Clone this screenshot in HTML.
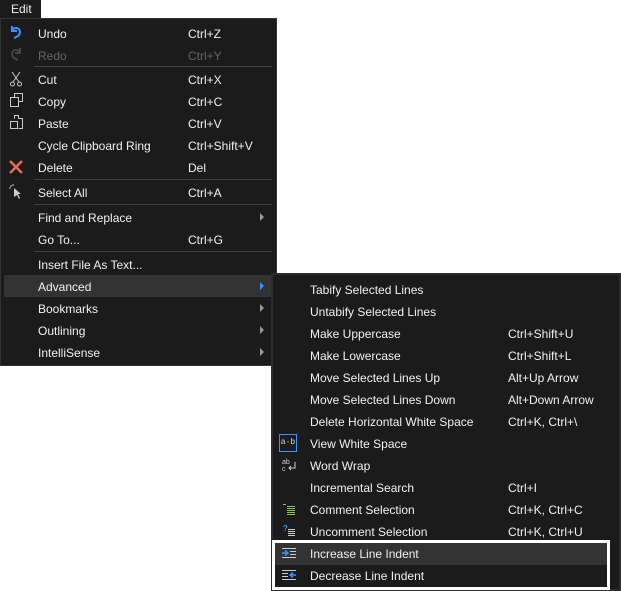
<!DOCTYPE html>
<html><head><style>
body{margin:0;width:621px;height:591px;background:#fff;position:relative;overflow:hidden;font-family:"Liberation Sans",sans-serif;font-size:12px;color:#f1f1f1}
.tab{position:absolute;left:0;top:0;width:41px;height:18px;background:#1b1b1c;color:#f1f1f1;line-height:19px;padding-left:11px;box-sizing:border-box}
.menu{position:absolute;background:#1b1b1c;border:1px solid #333337;box-sizing:border-box}
.it{position:absolute;height:22px;line-height:24px;white-space:nowrap}
.sc{position:absolute;line-height:24px}
.sep{position:absolute;height:1px;background:#3f3f46}
.arr{position:absolute;width:0;height:0;border-left:4px solid #999;border-top:4px solid transparent;border-bottom:4px solid transparent}
.ic{position:absolute}
</style></head><body>
<div class="tab">Edit</div>
<div class="menu" style="left:0;top:18px;width:277px;height:348px"></div>
<div style="position:absolute;left:4px;top:275px;width:269px;height:22px;background:#333334"></div>
<div class="menu" style="left:271px;top:273px;width:350px;height:318px;border-color:#2d2d30;border-width:2px"></div>
<div style="position:absolute;left:275px;top:543px;width:332px;height:22px;background:#333334"></div>
<div style="position:absolute;left:272px;top:540px;width:338px;height:50px;border:3px solid #fff;box-sizing:border-box"></div>

<div class="it" style="left:38px;top:22px">Undo</div><div class="sc" style="left:188px;top:22px">Ctrl+Z</div>
<div class="it" style="left:38px;top:44px;color:#656565">Redo</div><div class="sc" style="left:188px;top:44px;color:#656565">Ctrl+Y</div>
<div class="sep" style="left:34px;top:66px;width:238px"></div>
<div class="it" style="left:38px;top:68px">Cut</div><div class="sc" style="left:188px;top:68px">Ctrl+X</div>
<div class="it" style="left:38px;top:90px">Copy</div><div class="sc" style="left:188px;top:90px">Ctrl+C</div>
<div class="it" style="left:38px;top:112px">Paste</div><div class="sc" style="left:188px;top:112px">Ctrl+V</div>
<div class="it" style="left:38px;top:134px">Cycle Clipboard Ring</div><div class="sc" style="left:188px;top:134px">Ctrl+Shift+V</div>
<div class="it" style="left:38px;top:156px">Delete</div><div class="sc" style="left:188px;top:156px">Del</div>
<div class="sep" style="left:34px;top:179px;width:238px"></div>
<div class="it" style="left:38px;top:181px">Select All</div><div class="sc" style="left:188px;top:181px">Ctrl+A</div>
<div class="sep" style="left:34px;top:204px;width:238px"></div>
<div class="it" style="left:38px;top:206px">Find and Replace</div><div class="arr" style="left:260px;top:213px"></div>
<div class="it" style="left:38px;top:228px">Go To...</div><div class="sc" style="left:188px;top:228px">Ctrl+G</div>
<div class="sep" style="left:34px;top:251px;width:238px"></div>
<div class="it" style="left:38px;top:253px">Insert File As Text...</div>
<div class="it" style="left:38px;top:275px">Advanced</div><div class="arr" style="left:260px;top:282px;border-left-color:#3794ff"></div>
<div class="it" style="left:38px;top:297px">Bookmarks</div><div class="arr" style="left:260px;top:304px"></div>
<div class="it" style="left:38px;top:319px">Outlining</div><div class="arr" style="left:260px;top:326px"></div>
<div class="it" style="left:38px;top:341px">IntelliSense</div><div class="arr" style="left:260px;top:348px"></div>

<svg class="ic" style="left:8px;top:24px" width="16" height="16"><path d="M4 2v5h5M4 6.5C6 3 12 3 12 8c0 3-3 5-6 6" stroke="#3794ff" stroke-width="2" fill="none"/></svg>
<svg class="ic" style="left:8px;top:46px" width="16" height="16"><path d="M12 2v5H7M12 6.5C10 3 4 3 4 8c0 3 3 5 6 6" stroke="#444" stroke-width="2" fill="none"/></svg>
<svg class="ic" style="left:9px;top:71px" width="14" height="16"><path d="M3 1l7 10M11 1L4 11" stroke="#ccc" fill="none"/><circle cx="3.5" cy="13" r="2" stroke="#ccc" fill="none"/><circle cx="10.5" cy="13" r="2" stroke="#ccc" fill="none"/></svg>
<svg class="ic" style="left:10px;top:93px" width="14" height="15"><path d="M4.5 4.5V0.5h8v8H9M0.5 4.5h8v9h-8z" stroke="#ccc" fill="none"/></svg>
<svg class="ic" style="left:10px;top:115px" width="14" height="15"><path d="M4.5 3.5v-3h4v3M0.5 6.5h7v7h-7zM8.5 3.5h4v10h-4" stroke="#ccc" fill="none"/></svg>
<svg class="ic" style="left:9px;top:160px" width="14" height="14"><path d="M1 1l12 12M13 1L1 13" stroke="#e8695a" stroke-width="2.5"/></svg>
<svg class="ic" style="left:9px;top:184px" width="14" height="16"><path d="M5 4l7 6h-3l2 4-1 1-2-4-3 2z" fill="#ccc"/><path d="M2 1v2M0 4h2M4 0v2" stroke="#ccc"/></svg>

<div class="it" style="left:310px;top:278px">Tabify Selected Lines</div>
<div class="it" style="left:310px;top:300px">Untabify Selected Lines</div>
<div class="it" style="left:310px;top:322px">Make Uppercase</div><div class="sc" style="left:508px;top:322px">Ctrl+Shift+U</div>
<div class="it" style="left:310px;top:344px">Make Lowercase</div><div class="sc" style="left:508px;top:344px">Ctrl+Shift+L</div>
<div class="it" style="left:310px;top:366px">Move Selected Lines Up</div><div class="sc" style="left:508px;top:366px">Alt+Up Arrow</div>
<div class="it" style="left:310px;top:388px">Move Selected Lines Down</div><div class="sc" style="left:508px;top:388px">Alt+Down Arrow</div>
<div class="it" style="left:310px;top:410px">Delete Horizontal White Space</div><div class="sc" style="left:508px;top:410px">Ctrl+K, Ctrl+\</div>
<div class="it" style="left:310px;top:432px">View White Space</div>
<div class="it" style="left:310px;top:454px">Word Wrap</div>
<div class="it" style="left:310px;top:476px">Incremental Search</div><div class="sc" style="left:508px;top:476px">Ctrl+I</div>
<div class="it" style="left:310px;top:498px">Comment Selection</div><div class="sc" style="left:508px;top:498px">Ctrl+K, Ctrl+C</div>
<div class="it" style="left:310px;top:520px">Uncomment Selection</div><div class="sc" style="left:508px;top:520px">Ctrl+K, Ctrl+U</div>
<div class="it" style="left:310px;top:542px">Increase Line Indent</div>
<div class="it" style="left:310px;top:564px">Decrease Line Indent</div>

<div class="ic" style="left:279px;top:434px;width:18px;height:18px;border:1px solid #3794ff;box-sizing:border-box;font-size:8px;line-height:16px;text-align:center;color:#ddd;font-family:'Liberation Mono',monospace">a·b</div>
<svg class="ic" style="left:282px;top:457px" width="16" height="16"><text x="0" y="7" font-size="7" fill="#ccc" font-family="Liberation Sans">ab</text><text x="0" y="14" font-size="7" fill="#ccc" font-family="Liberation Sans">c</text><path d="M13 5v6H7M9 9l-2 2 2 2" stroke="#ccc" fill="none"/></svg>
<svg class="ic" style="left:283px;top:503px" width="12" height="12"><path d="M0 1.5h3M4 3.5h8M4 5.5h8M4 7.5h8M4 9.5h8M4 11.5h8" stroke="#8bc34a"/></svg>
<svg class="ic" style="left:283px;top:524px" width="12" height="14"><text x="0" y="7" font-size="8" fill="#3794ff" font-family="Liberation Sans" font-weight="bold">?</text><path d="M5 5.5h7M5 7.5h7M5 9.5h7M5 11.5h7" stroke="#ccc"/></svg>
<svg class="ic" style="left:282px;top:547px" width="14" height="12"><path d="M0 1.5h14M8 4.5h6M8 7.5h6M0 10.5h14" stroke="#ccc"/><path d="M0 6h5M3 3.5l3 2.5-3 2.5" stroke="#3794ff" stroke-width="1.5" fill="none"/></svg>
<svg class="ic" style="left:282px;top:569px" width="14" height="12"><path d="M0 1.5h14M0 4.5h6M0 7.5h6M0 10.5h14" stroke="#ccc"/><path d="M14 6H9M11 3.5L8 6 11 8.5" stroke="#3794ff" stroke-width="1.5" fill="none"/></svg>
</body></html>
